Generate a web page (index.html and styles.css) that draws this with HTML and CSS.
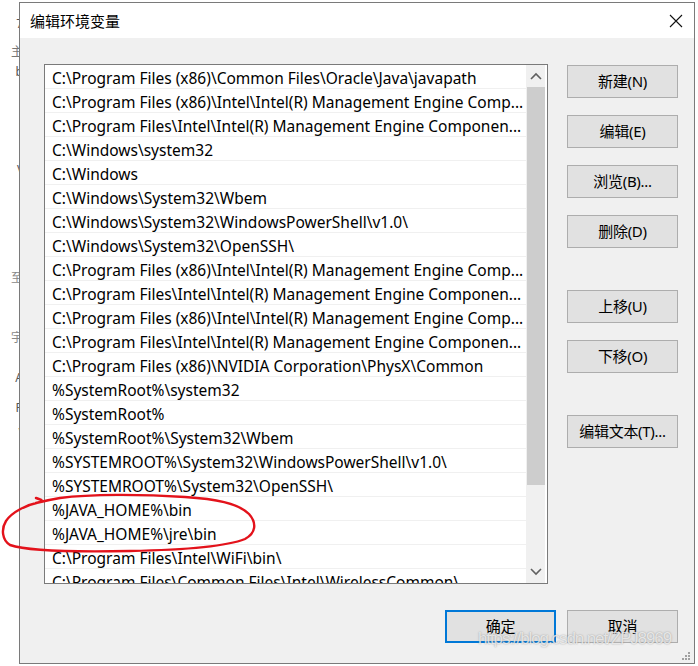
FILE: index.html
```html
<!DOCTYPE html>
<html lang="zh-CN">
<head>
    <meta charset="UTF-8">
    <meta name="viewport" content="width=device-width, initial-scale=1.0">
    <title>编辑环境变量</title>
    <link rel="stylesheet" href="styles.css">
</head>
<body>
    <div class="screen">
        <div class="backdrop">
            <span class="frag f1">7</span>
            <span class="frag f2">主</span>
            <span class="frag f3">b</span>
            <span class="frag f4">'</span>
            <span class="frag f5">I</span>
            <span class="frag f6">:</span>
            <span class="frag f7">v</span>
            <span class="frag f8">至</span>
            <span class="frag f9">:</span>
            <span class="frag f10">宇</span>
            <span class="frag f11">I</span>
            <span class="frag f12">A</span>
            <span class="frag f13">R</span>
            <span class="frag f14">\</span>
        </div>

        <div class="dialog">
            <div class="titlebar">
                <span class="title">编辑环境变量</span>
                <button class="close" aria-label="关闭">
                    <svg width="14" height="14" viewBox="0 0 14 14" fill="none" stroke="#111" stroke-width="1.1">
                        <path d="M1 1L13 13M13 1L1 13"></path>
                    </svg>
                </button>
            </div>

            <div class="content">
                <div class="main">
                    <div class="listbox">
                        <ul class="paths">
                            <li>C:\Program Files (x86)\Common Files\Oracle\Java\javapath</li>
                            <li>C:\Program Files (x86)\Intel\Intel(R) Management Engine Comp...</li>
                            <li>C:\Program Files\Intel\Intel(R) Management Engine Componen...</li>
                            <li>C:\Windows\system32</li>
                            <li>C:\Windows</li>
                            <li>C:\Windows\System32\Wbem</li>
                            <li>C:\Windows\System32\WindowsPowerShell\v1.0\</li>
                            <li>C:\Windows\System32\OpenSSH\</li>
                            <li>C:\Program Files (x86)\Intel\Intel(R) Management Engine Comp...</li>
                            <li>C:\Program Files\Intel\Intel(R) Management Engine Componen...</li>
                            <li>C:\Program Files (x86)\Intel\Intel(R) Management Engine Comp...</li>
                            <li>C:\Program Files\Intel\Intel(R) Management Engine Componen...</li>
                            <li>C:\Program Files (x86)\NVIDIA Corporation\PhysX\Common</li>
                            <li>%SystemRoot%\system32</li>
                            <li>%SystemRoot%</li>
                            <li>%SystemRoot%\System32\Wbem</li>
                            <li>%SYSTEMROOT%\System32\WindowsPowerShell\v1.0\</li>
                            <li>%SYSTEMROOT%\System32\OpenSSH\</li>
                            <li>%JAVA_HOME%\bin</li>
                            <li>%JAVA_HOME%\jre\bin</li>
                            <li>C:\Program Files\Intel\WiFi\bin\</li>
                            <li>C:\Program Files\Common Files\Intel\WirelessCommon\</li>
                        </ul>
                        <div class="scrollbar">
                            <div class="arrow">
                                <svg width="12" height="8" viewBox="0 0 12 8" fill="none" stroke="#606060" stroke-width="1.6">
                                    <path d="M1 7L6 2L11 7"></path>
                                </svg>
                            </div>
                            <div class="thumb"></div>
                            <div class="track"></div>
                            <div class="arrow">
                                <svg width="12" height="8" viewBox="0 0 12 8" fill="none" stroke="#606060" stroke-width="1.6">
                                    <path d="M1 1L6 6L11 1"></path>
                                </svg>
                            </div>
                        </div>
                    </div>

                    <div class="side-buttons">
                        <div class="group">
                            <button class="button">新建(N)</button>
                            <button class="button">编辑(E)</button>
                            <button class="button">浏览(B)...</button>
                            <button class="button">删除(D)</button>
                        </div>
                        <div class="group">
                            <button class="button">上移(U)</button>
                            <button class="button">下移(O)</button>
                        </div>
                        <div class="group">
                            <button class="button">编辑文本(T)...</button>
                        </div>
                    </div>
                </div>

                <div class="footer">
                    <button class="button default-button">确定</button>
                    <button class="button">取消</button>
                </div>
            </div>

            <svg class="grip" width="10" height="10" viewBox="0 0 10 10" fill="#a0a0a0">
                <rect x="7" y="1" width="2" height="2"></rect>
                <rect x="4" y="4" width="2" height="2"></rect>
                <rect x="7" y="4" width="2" height="2"></rect>
                <rect x="1" y="7" width="2" height="2"></rect>
                <rect x="4" y="7" width="2" height="2"></rect>
                <rect x="7" y="7" width="2" height="2"></rect>
            </svg>
        </div>
    </div>

    <!-- hand drawn red mark around the two JAVA_HOME rows -->
    <svg class="annotation" width="270" height="70" viewBox="0 490 270 70" fill="none" stroke="#e3121b" stroke-width="2.4" stroke-linecap="round" stroke-linejoin="round">
        <path d="M36 498 C 42 500 44 501 40 502 C 26 505 12 512 6 521 C 1 529 2 540 10 545 C 30 552 80 552 130 551 C 180 550 225 547 245 539 C 256 533 257 523 249 514 C 238 503 215 499 185 497 C 140 494 90 494 60 498 C 48 500 40 502 36 503"></path>
    </svg>

    <div class="watermark">https://blog.csdn.net/ZPJ8969</div>
</body>
</html>
```

FILE: styles.css
```css
* {
    margin: 0;
    padding: 0;
    box-sizing: border-box;
}

:root {
    --dialog-bg: #f0f0f0;
    --border: #7a7a7a;
    --button-bg: #e1e1e1;
    --button-border: #adadad;
    --accent: #0078d7;
    --row-line: #f0f0f0;
    --thumb: #cdcdcd;
}

body {
    font-family: 'Noto Sans', 'Noto Sans CJK SC', sans-serif;
    background: #ffffff;
    color: #000000;
    width: 698px;
    height: 666px;
    overflow: hidden;
    position: relative;
}

.screen {
    display: flex;
    height: 666px;
    padding-top: 2px;
}

/* page behind the dialog, only a sliver is visible */
.backdrop {
    width: 19px;
    position: relative;
    overflow: hidden;
}

.frag {
    position: absolute;
    right: -4px;
    font-size: 12px;
    color: #555;
    line-height: 1;
}

.f1 { top: 16px; }
.f2 { top: 44px; color: #777; }
.f3 { top: 64px; }
.f4 { top: 90px; }
.f5 { top: 120px; color: #2a4a8a; }
.f6 { top: 136px; }
.f7 { top: 160px; }
.f8 { top: 270px; color: #888; }
.f9 { top: 295px; }
.f10 { top: 330px; color: #888; }
.f11 { top: 346px; color: #2a4a8a; }
.f12 { top: 370px; }
.f13 { top: 400px; }
.f14 { top: 425px; }

.dialog {
    width: 676px;
    height: 662px;
    border: 1px solid var(--border);
    background: var(--dialog-bg);
    display: flex;
    flex-direction: column;
    position: relative;
}

.titlebar {
    height: 35px;
    background: #ffffff;
    display: flex;
    align-items: center;
    justify-content: space-between;
}

.title {
    padding-left: 10px;
    padding-bottom: 1px;
    font-family: 'Noto Sans CJK SC', sans-serif;
    font-size: 15px;
}

.close {
    width: 36px;
    height: 35px;
    border: none;
    background: transparent;
    display: flex;
    align-items: center;
    justify-content: center;
}

.content {
    flex: 1;
    padding: 26px 16px 0 24px;
}

.main {
    display: flex;
    gap: 19px;
}

.listbox {
    width: 504px;
    height: 520px;
    border: 1px solid var(--border);
    background: #ffffff;
    display: flex;
    overflow: hidden;
}

.paths {
    list-style: none;
    width: 481px;
    overflow: hidden;
}

.paths li {
    height: 24px;
    padding-top: 3px;
    line-height: 20px;
    padding-left: 7px;
    border-bottom: 1px solid var(--row-line);
    font-size: 15.5px;
    white-space: nowrap;
    overflow: hidden;
}

.scrollbar {
    width: 19px;
    margin-right: 2px;
    background: var(--dialog-bg);
    display: flex;
    flex-direction: column;
}

.arrow {
    height: 22px;
    display: flex;
    align-items: center;
    justify-content: center;
}

.thumb {
    height: 398px;
    margin-left: 1px;
    background: var(--thumb);
}

.track {
    flex: 1;
}

.side-buttons {
    display: flex;
    flex-direction: column;
    gap: 42px;
    padding-top: 1px;
}

.group {
    display: flex;
    flex-direction: column;
    gap: 17px;
}

.button {
    width: 111px;
    height: 33px;
    background: var(--button-bg);
    border: 1px solid var(--button-border);
    font-family: 'Noto Sans', 'Noto Sans CJK SC', sans-serif;
    font-size: 15px;
    color: #000000;
    letter-spacing: -0.3px;
    padding-bottom: 2px;
}

.footer {
    display: flex;
    justify-content: flex-end;
    gap: 11px;
    margin-top: 26px;
}

.default-button {
    border: 2px solid var(--accent);
}

.grip {
    position: absolute;
    right: 3px;
    bottom: 2px;
}

.annotation {
    position: absolute;
    left: 0;
    top: 490px;
}

.watermark {
    position: absolute;
    left: 478px;
    top: 629px;
    font-family: 'Liberation Sans', sans-serif;
    font-size: 17px;
    color: rgba(250, 250, 250, 0.75);
    text-shadow: 0 0 1.5px rgba(90, 90, 90, 0.6);
    letter-spacing: -1.1px;
    white-space: nowrap;
}
```
